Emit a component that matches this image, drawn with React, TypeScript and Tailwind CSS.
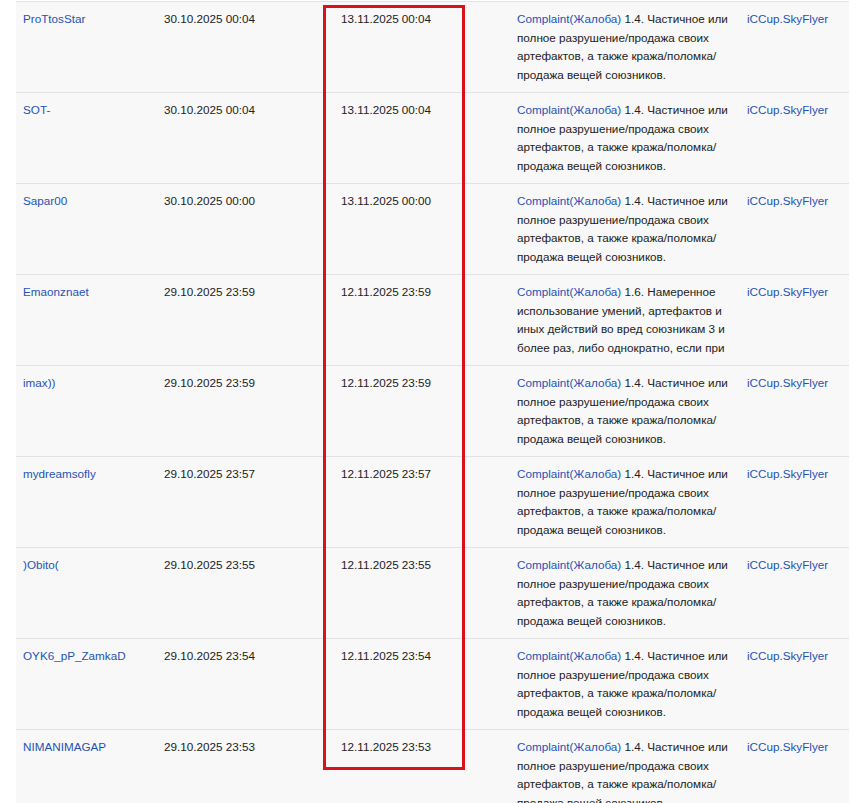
import React from "react";

type Row = { name: string; d1: string; d2: string; rule: "1.4" | "1.6" };

const rows: Row[] = [
  { name: "ProTtosStar", d1: "30.10.2025 00:04", d2: "13.11.2025 00:04", rule: "1.4" },
  { name: "SOT-", d1: "30.10.2025 00:04", d2: "13.11.2025 00:04", rule: "1.4" },
  { name: "Sapar00", d1: "30.10.2025 00:00", d2: "13.11.2025 00:00", rule: "1.4" },
  { name: "Emaonznaet", d1: "29.10.2025 23:59", d2: "12.11.2025 23:59", rule: "1.6" },
  { name: "imax))", d1: "29.10.2025 23:59", d2: "12.11.2025 23:59", rule: "1.4" },
  { name: "mydreamsofly", d1: "29.10.2025 23:57", d2: "12.11.2025 23:57", rule: "1.4" },
  { name: ")Obito(", d1: "29.10.2025 23:55", d2: "12.11.2025 23:55", rule: "1.4" },
  { name: "OYK6_pP_ZamkaD", d1: "29.10.2025 23:54", d2: "12.11.2025 23:54", rule: "1.4" },
  { name: "NIMANIMAGAP", d1: "29.10.2025 23:53", d2: "12.11.2025 23:53", rule: "1.4" },
];

const Reason = ({ rule }: { rule: "1.4" | "1.6" }) => {
  if (rule === "1.6") {
    return (
      <>
        <span className="text-[#2553b4]">Complaint(Жалоба)</span> 1.6. Намеренное
        <br />
        использование умений, артефактов и
        <br />
        иных действий во вред союзникам 3 и
        <br />
        более раз, либо однократно, если при
      </>
    );
  }
  return (
    <>
      <span className="text-[#2553b4]">Complaint(Жалоба)</span> 1.4. Частичное или
      <br />
      полное разрушение/продажа своих
      <br />
      артефактов, а также кража/поломка/
      <br />
      продажа вещей союзников.
    </>
  );
};

export default function App() {
  return (
    <div
      className="relative h-[803px] w-[860px] overflow-hidden bg-white text-[11.7px] leading-[18.5px] text-[#222222]"
      style={{ fontFamily: '"Liberation Sans", Arial, sans-serif' }}
    >
      <div className="ml-[16px] mt-[1px] w-[833px] border-t border-[#e3e3e3]">
        {rows.map((r, i) => (
          <div key={i} className="flex h-[91px] border-b border-[#e3e3e3] bg-[#f8f8f8]">
            <div className="w-[141px] shrink-0 overflow-hidden pl-[7px] pt-[8px] text-[#2553b4]">{r.name}</div>
            <div className="w-[177px] shrink-0 overflow-hidden pl-[7px] pt-[8px]">{r.d1}</div>
            <div className="w-[176px] shrink-0 overflow-hidden pl-[7px] pt-[8px]">{r.d2}</div>
            <div className="h-[90px] w-[230px] shrink-0 overflow-hidden pl-[7px] pt-[8px]">
              <div className="whitespace-nowrap">
                <Reason rule={r.rule} />
              </div>
            </div>
            <div className="w-[109px] shrink-0 overflow-hidden pl-[7px] pt-[8px] text-[#2553b4]">iCCup.SkyFlyer</div>
          </div>
        ))}
      </div>
      <div className="pointer-events-none absolute left-[323px] top-[5px] h-[765px] w-[142px] border-[3px] border-[#d9111b]" />
    </div>
  );
}
